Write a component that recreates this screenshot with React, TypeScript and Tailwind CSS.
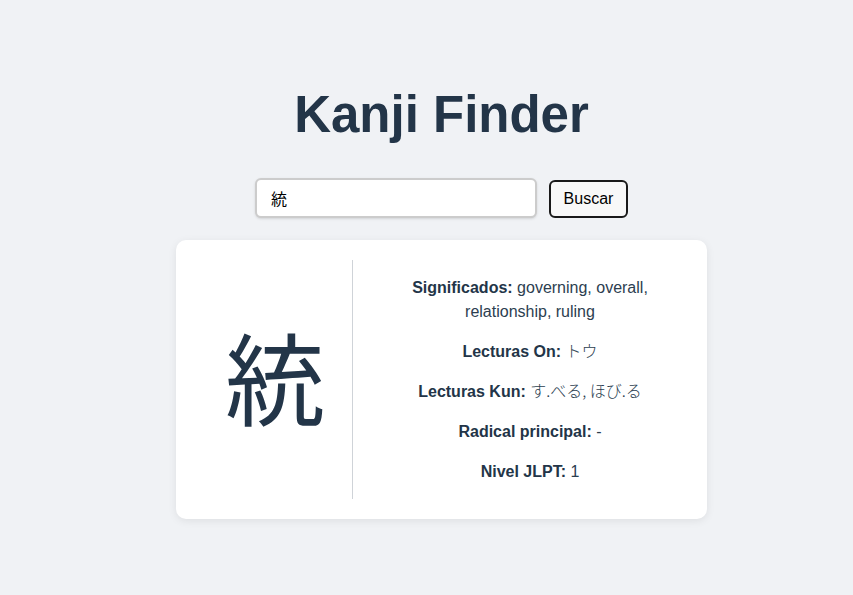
import { useState } from 'react';

const kanji = {
  char: '統',
  meanings: ['governing', 'overall', 'relationship', 'ruling'],
  on: ['トウ'],
  kun: ['す.べる', 'ほび.る'],
  radical: '-',
  jlpt: 1,
};

const jp = '"Noto Sans CJK JP", "Noto Sans CJK SC", sans-serif';

function Row({ label, children }: { label: string; children: React.ReactNode }) {
  return (
    <p className="leading-6">
      <span className="font-bold text-[#233548]">{label}:</span>{' '}
      <span className="text-[#2c3e50]">{children}</span>
    </p>
  );
}

export default function App() {
  const [query, setQuery] = useState(kanji.char);

  return (
    <div
      className="min-h-[595px] w-full bg-[#f0f2f5] pl-[30px] pt-[79px] flex flex-col items-center"
      style={{ fontFamily: '"Liberation Sans", Arial, "Noto Sans CJK JP", sans-serif' }}
    >
      <h1 className="text-[51px] leading-[72px] font-bold text-[#233548]">Kanji Finder</h1>

      <div className="mt-[26px] flex items-center gap-3">
        <input
          value={query}
          onChange={(e) => setQuery(e.target.value)}
          className="w-[282px] h-[40px] px-[14px] text-base text-black bg-white border-2 border-[#cccccc] rounded-md shadow-sm outline-none"
          style={{ fontFamily: jp }}
        />
        <button className="w-[79px] h-[38px] mt-[3px] text-base text-black bg-[#f8f8f8] border-2 border-[#1a1a1a] rounded-md">
          Buscar
        </button>
      </div>

      <div className="mt-[22px] w-[531px] h-[279px] bg-white rounded-[10px] shadow-[0_2px_8px_rgba(0,0,0,0.08)] py-5 flex">
        <div className="w-[177px] pl-[22px] pb-[10px] border-r border-[#cfd3d8] flex items-center justify-center">
          <span className="text-[100px] leading-none text-[#233548]" style={{ fontFamily: jp }}>
            {kanji.char}
          </span>
        </div>
        <div className="flex-1 px-5 flex flex-col justify-center items-center text-center text-base gap-4">
          <Row label="Significados">{kanji.meanings.join(', ')}</Row>
          <Row label="Lecturas On">
            <span style={{ fontFamily: jp }} className="font-light leading-4">{kanji.on.join(', ')}</span>
          </Row>
          <Row label="Lecturas Kun">
            <span style={{ fontFamily: jp }} className="font-light leading-4">{kanji.kun.join(', ')}</span>
          </Row>
          <Row label="Radical principal">{kanji.radical}</Row>
          <Row label="Nivel JLPT">{kanji.jlpt}</Row>
        </div>
      </div>
    </div>
  );
}
